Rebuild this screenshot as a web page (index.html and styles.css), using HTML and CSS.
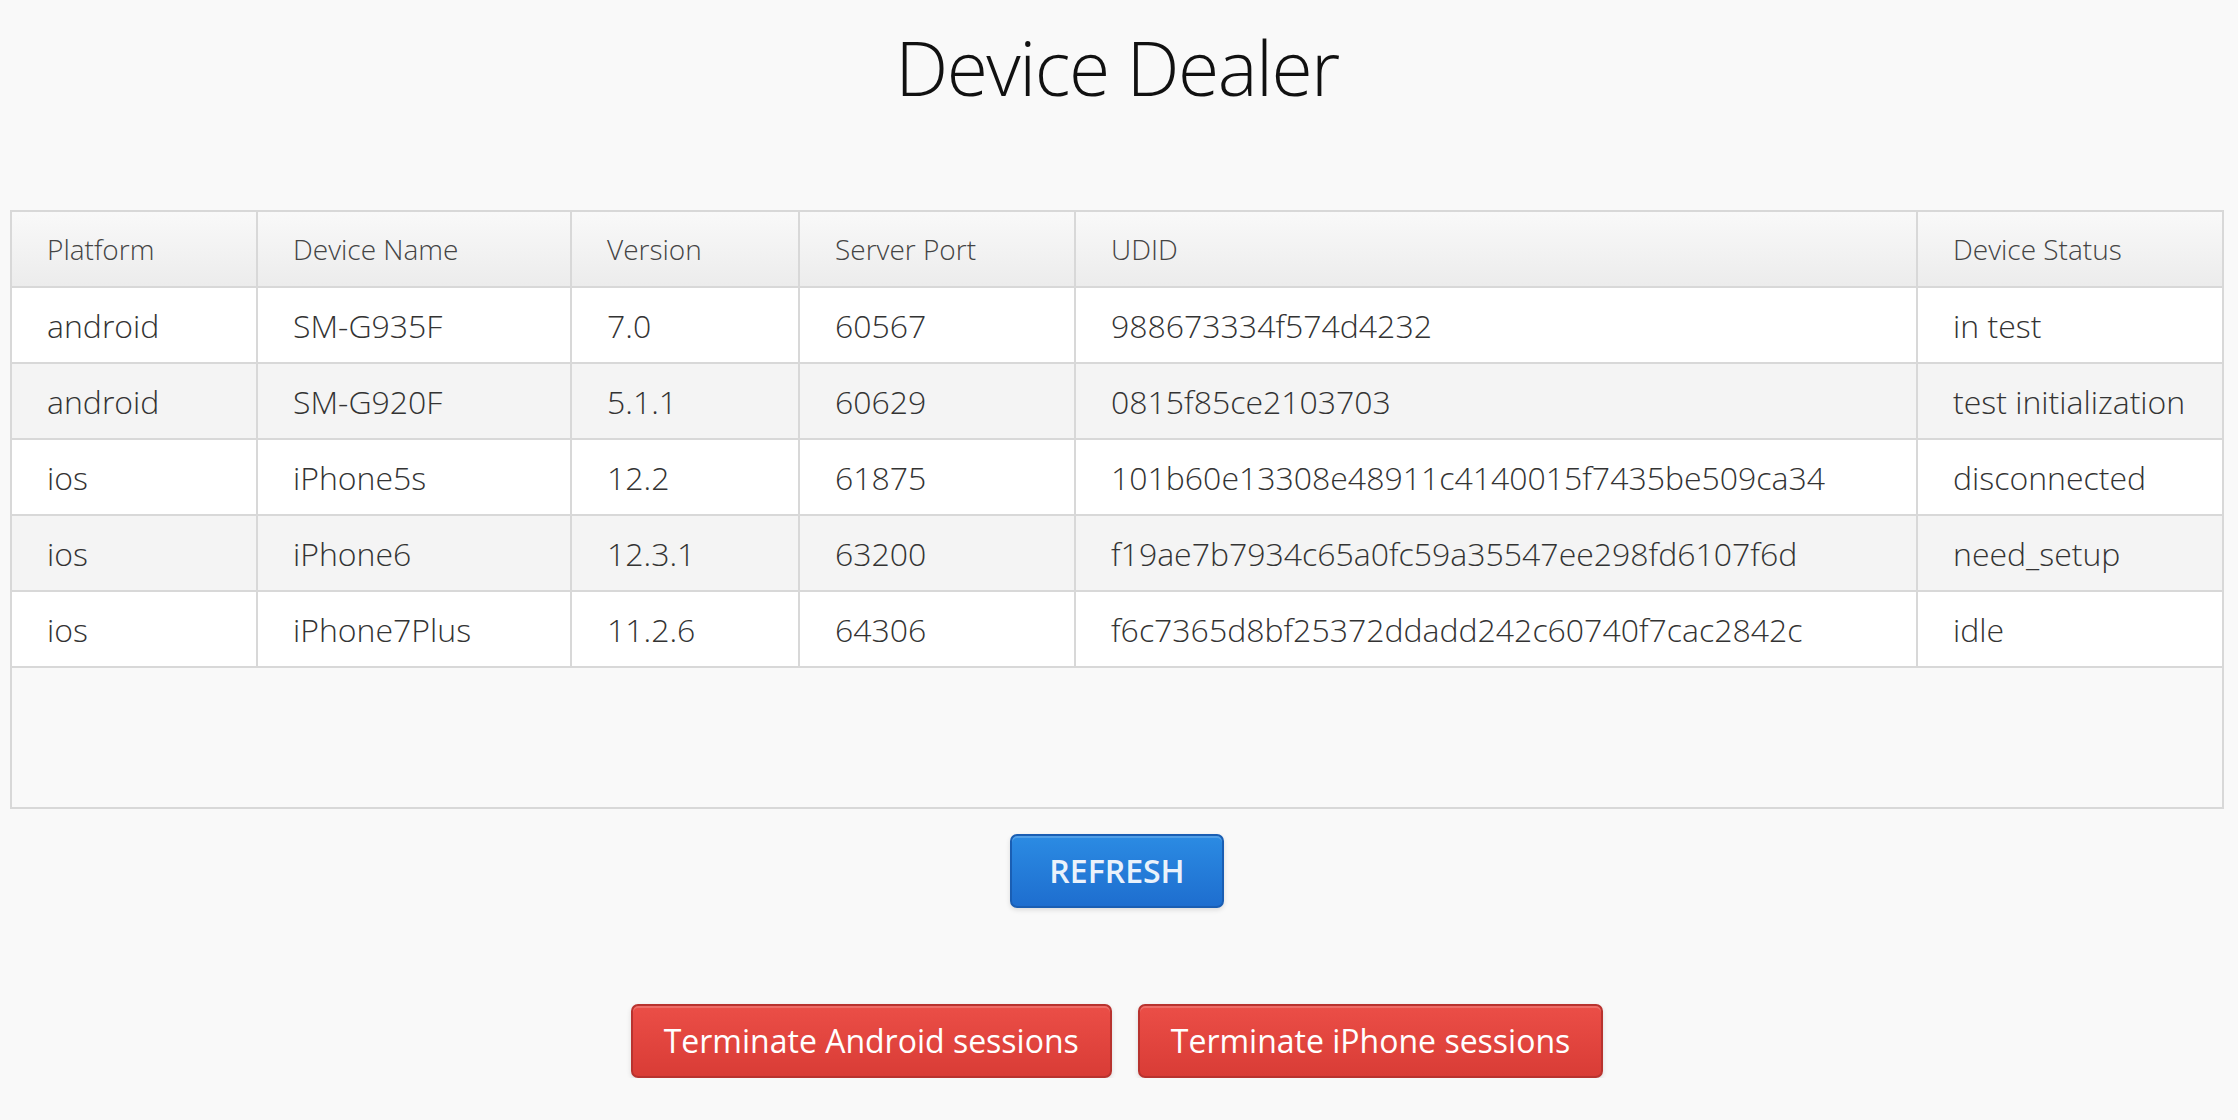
FILE: index.html
```html
<!DOCTYPE html>
<html>
<head>
<meta charset="utf-8">
<title>Device Dealer</title>
<link rel="stylesheet" href="styles.css">
</head>
<body>
<div class="page">
  <h1 class="title">Device Dealer</h1>
  <div class="table-box">
    <table class="devices">
      <thead>
        <tr>
          <th class="c1">Platform</th>
          <th class="c2">Device Name</th>
          <th class="c3">Version</th>
          <th class="c4">Server Port</th>
          <th class="c5">UDID</th>
          <th class="c6">Device Status</th>
        </tr>
      </thead>
      <tbody>
        <tr><td>android</td><td>SM-G935F</td><td>7.0</td><td>60567</td><td>988673334f574d4232</td><td>in test</td></tr>
        <tr><td>android</td><td>SM-G920F</td><td>5.1.1</td><td>60629</td><td>0815f85ce2103703</td><td>test initialization</td></tr>
        <tr><td>ios</td><td>iPhone5s</td><td>12.2</td><td>61875</td><td>101b60e13308e48911c4140015f7435be509ca34</td><td>disconnected</td></tr>
        <tr><td>ios</td><td>iPhone6</td><td>12.3.1</td><td>63200</td><td>f19ae7b7934c65a0fc59a35547ee298fd6107f6d</td><td>need_setup</td></tr>
        <tr><td>ios</td><td>iPhone7Plus</td><td>11.2.6</td><td>64306</td><td>f6c7365d8bf25372ddadd242c60740f7cac2842c</td><td>idle</td></tr>
      </tbody>
    </table>
  </div>
  <div class="refresh-row">
    <button class="btn btn-blue">REFRESH</button>
  </div>
  <div class="terminate-row">
    <button class="btn btn-red">Terminate Android sessions</button>
    <button class="btn btn-red">Terminate iPhone sessions</button>
  </div>
</div>
</body>
</html>
```

FILE: styles.css
```css
* { box-sizing: border-box; }

html, body {
  margin: 0;
  padding: 0;
  background: #f9f9f9;
}

body {
  font-family: "Open Sans", "Noto Sans", sans-serif;
}

.page {
  padding: 0 14px 0 10px;
}

.title {
  margin: 0;
  padding-top: 16px;
  font-size: 75px;
  font-weight: 300;
  letter-spacing: -1.5px;
  line-height: normal;
  color: #111;
  text-align: center;
}

.table-box {
  margin-top: 92px;
  height: 599px;
  border: 2px solid #d8d8d8;
  background: #f9f9f9;
}

.devices {
  width: 100%;
  table-layout: fixed;
  border-collapse: separate;
  border-spacing: 0;
}

.devices th,
.devices td {
  height: 76px;
  padding: 0 0 0 35px;
  text-align: left;
  border-right: 2px solid #d8d8d8;
  border-bottom: 2px solid #d8d8d8;
  white-space: nowrap;
  vertical-align: middle;
}

.devices th:last-child,
.devices td:last-child {
  border-right: none;
}

.devices th {
  font-size: 28px;
  font-weight: 300;
  color: #444;
  background: linear-gradient(#f9f9f9, #ececec);
}

.devices td {
  font-size: 32px;
  font-weight: 300;
  color: #333;
  background: #fff;
}

.devices tbody tr:nth-child(even) td {
  background: #f4f4f4;
}

.c1 { width: 246px; }
.c2 { width: 314px; }
.c3 { width: 228px; }
.c4 { width: 276px; }
.c5 { width: 842px; }
.c6 { width: 304px; }

.refresh-row {
  display: flex;
  justify-content: center;
  margin-top: 25px;
}

.terminate-row {
  display: flex;
  justify-content: center;
  gap: 26px;
  margin-top: 96px;
}

.btn {
  height: 74px;
  border-radius: 7px;
  font-family: "Open Sans", "Noto Sans", sans-serif;
  line-height: 1;
  cursor: pointer;
}

.btn-blue {
  width: 214px;
  font-size: 32px;
  font-weight: 600;
  color: #eaf2fb;
  background: linear-gradient(#2b8be3, #1e6ecf);
  border: 2px solid #1a5eb3;
  box-shadow: inset 0 2px 0 rgba(255,255,255,0.18), 0 2px 5px rgba(0,0,0,0.12);
}

.btn-red {
  padding: 0 31px;
  font-size: 32px;
  font-weight: 400;
  color: #fff;
  background: linear-gradient(#eb4e47, #d93c36);
  border: 2px solid #b8332f;
  box-shadow: inset 0 2px 0 rgba(255,255,255,0.18), 0 2px 5px rgba(0,0,0,0.12);
}
```
